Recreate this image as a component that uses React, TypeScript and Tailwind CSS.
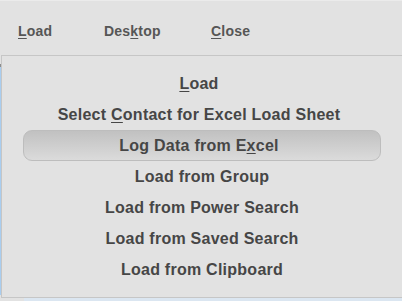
import React from "react"

const font = { fontFamily: '"Liberation Sans", Arial, sans-serif' }

const items: { before: string; key?: string; after?: string; active?: boolean }[] = [
  { before: "", key: "L", after: "oad" },
  { before: "Select ", key: "C", after: "ontact for Excel Load Sheet" },
  { before: "Log Data from E", key: "x", after: "cel", active: true },
  { before: "Load from Group" },
  { before: "Load from Power Search" },
  { before: "Load from Saved Search" },
  { before: "Load from Clipboard" },
]

function Mn({ children }: { children: React.ReactNode }) {
  return <span className="underline decoration-1 underline-offset-[2px]">{children}</span>
}

export default function App() {
  return (
    <div
      className="relative h-[301px] w-[402px] overflow-hidden bg-[#e2e2e2] border-t border-[#ebebeb]"
      style={font}
    >
      {/* menu bar */}
      <div className="flex h-[54px] items-start pt-[22px] pl-[18px] text-[14px] font-bold leading-[16px] tracking-[0.2px] text-[#565656]">
        <span className="w-[86px]">
          <Mn>L</Mn>oad
        </span>
        <span className="w-[107px]">
          Des<Mn>k</Mn>top
        </span>
        <span>
          <Mn>C</Mn>lose
        </span>
      </div>

      {/* window behind the menu */}
      <div className="flex h-[246px]">
        <div className="mt-[9px] flex w-px flex-col">
          <div className="h-[3px] bg-[#8d8d8d]" />
          <div className="h-[228px] bg-[#a9cdef]" />
        </div>
        <div className="flex flex-1 flex-col justify-end">
          <div className="ml-[23px] h-[3px] bg-[#dbe6f1]" />
        </div>
      </div>

      {/* dropdown */}
      <div className="absolute left-px right-0 top-[54px] h-[243px] border-y border-l border-[#c6c6c6] bg-[#e2e2e2] pt-[12px]">
        <div className="flex flex-col px-[21px]">
          {items.map((it, i) => (
            <div
              key={i}
              className={`flex h-[31px] items-center justify-center rounded-[9px] text-[16px] font-bold leading-[31px] tracking-[0.25px] text-[#464646] ${
                it.active
                  ? "border border-[#bdbdbd] bg-gradient-to-b from-[#c1c1c1] to-[#dbdbdb]"
                  : ""
              }`}
            >
              <span className={`whitespace-pre ${it.key ? "pr-[6px]" : ""}`}>
                {it.before}
                {it.key && <Mn>{it.key}</Mn>}
                {it.after}
              </span>
            </div>
          ))}
        </div>
      </div>
    </div>
  )
}
